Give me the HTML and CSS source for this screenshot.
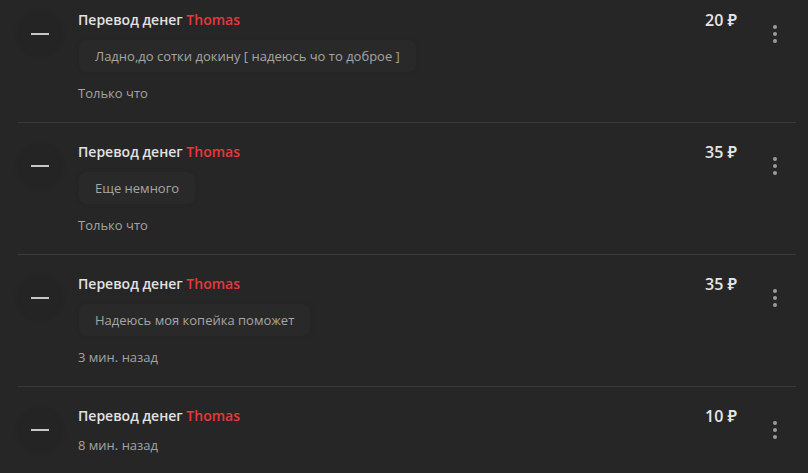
FILE: index.html
```html
<!DOCTYPE html>
<html lang="ru">
<head>
  <meta charset="UTF-8">
  <meta name="viewport" content="width=device-width, initial-scale=1.0">
  <title>Донаты</title>
  <link rel="stylesheet" href="styles.css">
</head>
<body>
  <div class="feed">

    <div class="donation">
      <div class="avatar"><span class="dash"></span></div>
      <div class="body">
        <div class="title">Перевод денег <span class="name">Thomas</span></div>
        <div class="message">Ладно,до сотки докину [ надеюсь чо то доброе ]</div>
        <div class="time">Только что</div>
      </div>
      <div class="amount">20 ₽</div>
      <button class="more"><i></i><i></i><i></i></button>
    </div>

    <div class="donation">
      <div class="avatar"><span class="dash"></span></div>
      <div class="body">
        <div class="title">Перевод денег <span class="name">Thomas</span></div>
        <div class="message">Еще немного</div>
        <div class="time">Только что</div>
      </div>
      <div class="amount">35 ₽</div>
      <button class="more"><i></i><i></i><i></i></button>
    </div>

    <div class="donation">
      <div class="avatar"><span class="dash"></span></div>
      <div class="body">
        <div class="title">Перевод денег <span class="name">Thomas</span></div>
        <div class="message">Надеюсь моя копейка поможет</div>
        <div class="time">3 мин. назад</div>
      </div>
      <div class="amount">35 ₽</div>
      <button class="more"><i></i><i></i><i></i></button>
    </div>

    <div class="donation">
      <div class="avatar"><span class="dash"></span></div>
      <div class="body">
        <div class="title">Перевод денег <span class="name">Thomas</span></div>
        <div class="time">8 мин. назад</div>
      </div>
      <div class="amount">10 ₽</div>
      <button class="more"><i></i><i></i><i></i></button>
    </div>

  </div>
</body>
</html>
```

FILE: styles.css
```css
body {
  margin: 0;
  background: #262626;
  font-family: 'Open Sans', 'Noto Sans', sans-serif;
  color: #dedede;
  overflow: hidden;
}

.feed {
  margin: -9px 12px 0 18px;
}

.donation {
  display: flex;
  align-items: flex-start;
  padding: 19px 0;
  border-bottom: 1px solid #3a3a3a;
}

.avatar {
  flex: none;
  width: 44px;
  height: 44px;
  margin-top: 2px;
  margin-right: 16px;
  border-radius: 50%;
  background: #242424;
  box-shadow: 0 0 5px rgba(0, 0, 0, 0.08);
  display: flex;
  justify-content: center;
  align-items: center;
}

.dash {
  width: 18px;
  height: 2px;
  background: #c8c8c8;
}

.body {
  flex: 1;
  min-width: 0;
}

.title {
  font-size: 14px;
  font-weight: 600;
  line-height: 20px;
  color: #e2e2e2;
}

.name {
  color: #e8383d;
}

.message {
  display: inline-block;
  margin: 10px 0 2px 1px;
  padding: 0 16px;
  height: 32px;
  line-height: 32px;
  font-size: 13px;
  color: #a6a6a6;
  background: #292929;
  border-radius: 8px;
  box-shadow: 0 0 6px rgba(0, 0, 0, 0.06);
}

.time {
  margin-top: 9px;
  font-size: 13px;
  line-height: 20px;
  color: #a3a3a3;
}

.amount {
  flex: none;
  font-size: 16px;
  font-weight: 600;
  line-height: 20px;
  color: #e6e6e6;
  margin-right: 17px;
}

.more {
  flex: none;
  width: 42px;
  height: 44px;
  margin-top: 2px;
  padding: 0;
  border: none;
  background: none;
  display: flex;
  flex-direction: column;
  justify-content: center;
  align-items: center;
  gap: 3px;
}

.more i {
  width: 4px;
  height: 4px;
  border-radius: 50%;
  background: #9c9c9c;
}
```
